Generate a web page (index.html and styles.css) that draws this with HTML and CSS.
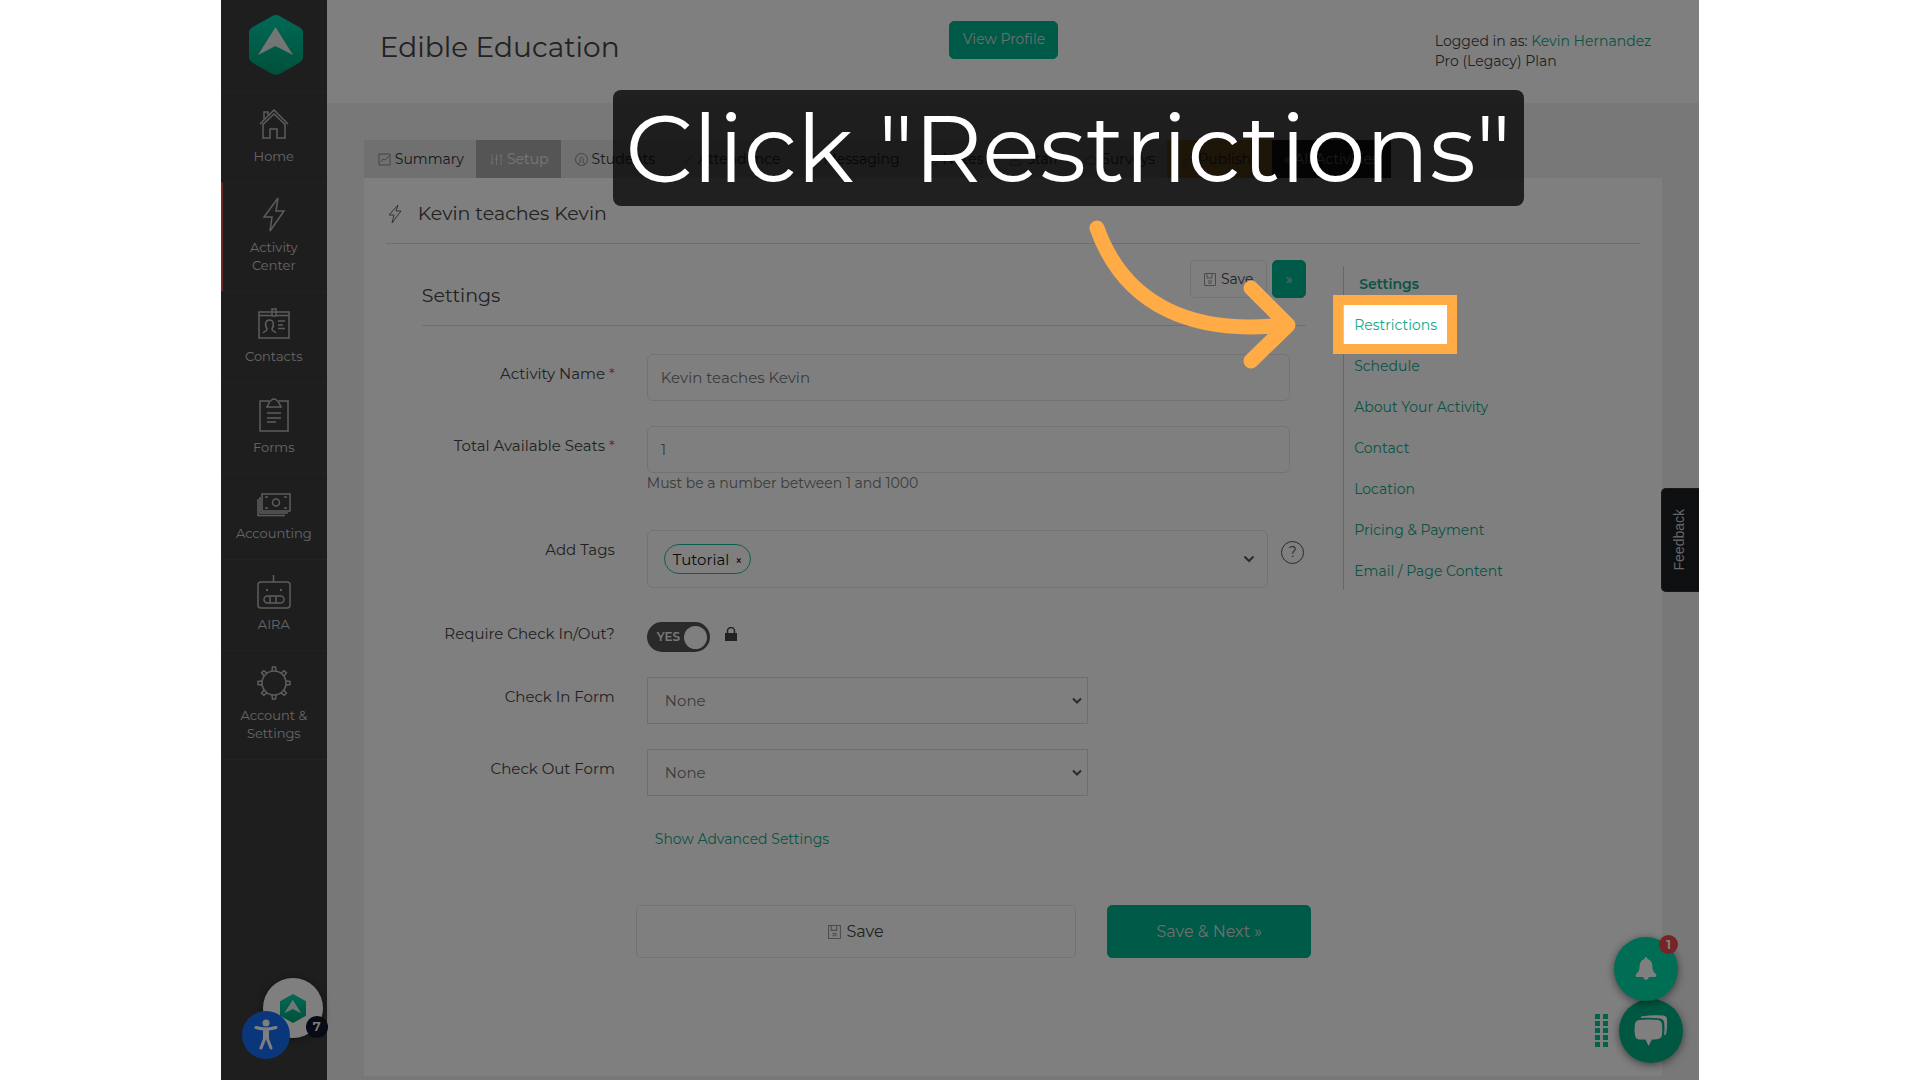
FILE: index.html
```html
<!DOCTYPE html>
<html lang="en">
  <head>
    <meta charset="UTF-8" />
    <meta name="viewport" content="width=device-width, initial-scale=1.0" />
    <title>Edible Education - Activity Settings</title>
    <link rel="stylesheet" href="styles.css">
  </head>
  <body>
    <div class="stage">
      <!-- Sidebar -->
      <aside class="sidebar">
        <a class="logo" href="#" aria-label="Dashboard">
          <svg width="54" height="60" viewBox="0 0 54 60">
            <defs>
              <linearGradient id="hex" x1="0" y1="0" x2="0" y2="1">
                <stop offset="0" stop-color="#00d4ae" />
                <stop offset="1" stop-color="#00a076" />
              </linearGradient>
            </defs>
            <path fill="url(#hex)" d="M23 1.200q4-2.200 8 0L51 12.500q3 2 3 5v25q0 3-3 5L31 58.800q-4 2.200-8 0L3 47.500q-3-2-3-5v-25q0-3 3-5z" />
            <path fill="#e4ece8" d="M26.500 12L44 40 26.500 31 9 40z" />
            <path fill="#c3cbc7" d="M26.500 31L44 40 17 27z" opacity=".5" />
          </svg>
        </a>
        <nav class="menu">
          <a href="#">
            <svg width="34" height="34" viewBox="0 0 34 34"><path d="M3 17L17 3l14 14M6 16v15h7v-9h7v9h8V16M6.500 17L17 7l10.500 10M7 12V5h4v3" /></svg>
            <span>Home</span>
          </a>
          <a href="#" class="current">
            <svg width="34" height="34" viewBox="0 0 34 34"><path d="M21 0L7 19h8l-2 14 14-20h-8z" /></svg>
            <span>Activity Center</span>
          </a>
          <a href="#">
            <svg width="34" height="34" viewBox="0 0 34 34"><path d="M2 5h30v26H2zM2 8.500h12M20 8.500h12M15 9V2h4v7zM6 26c1-2 4-1.500 4-4-3-5-1-9 2.500-9s5.500 4 2.500 9c0 2.500 3 2 4 4M21 14h7M21 18h5M21 21.500h7" /></svg>
            <span>Contacts</span>
          </a>
          <a href="#">
            <svg width="34" height="34" viewBox="0 0 34 34"><path d="M12 3H3v30h28V3h-9M13 3c2 0 1-2 4-2s2 2 4 2l3 6H10zM10 15h14M10 20h14M10 24h9" /></svg>
            <span>Forms</span>
          </a>
          <a href="#" class="short">
            <svg width="34" height="29" viewBox="0 0 34 29"><path d="M5 5h28v17H5zM3 8v16h28M1 10v16.500h27M8 8h3M27 8h3M8 19h3M27 19h3" /><circle cx="19" cy="13.500" r="3.500" /></svg>
            <span>Accounting</span>
          </a>
          <a href="#">
            <svg width="34" height="34" viewBox="0 0 34 34"><rect x="1" y="7" width="32" height="26" rx="3" /><path d="M16.500 7V0" /><rect x="7" y="21" width="20" height="7" rx="3.500" /><path d="M13 21v7M19 21v7" /><path d="M9 15h2M23 15h2" stroke-width="2" /></svg>
            <span>AIRA</span>
          </a>
          <a href="#">
            <svg width="34" height="34" viewBox="0 0 34 34"><circle cx="17" cy="17" r="12" /><g id="teeth"><path d="M15 5l.500-4h3l.500 4M15 29l.500 4h3l.500-4M5 15l-4 .500v3l4 .500M29 15l4 .500v3l-4 .500" /></g><use href="#teeth" transform="rotate(45 17 17)" /></svg>
            <span>Account &amp; Settings</span>
          </a>
        </nav>
      </aside>

      <div class="page">
        <header class="topbar">
          <h1>Edible Education</h1>
          <button class="btn green profile">View Profile</button>
          <p class="login">Logged in as: <a href="#">Kevin Hernandez</a><br />Pro (Legacy) Plan</p>
        </header>

        <main class="content">
          <nav class="tabs">
            <a href="#"><svg width="13" height="13" viewBox="0 0 13 13"><path d="M1 1h11v11H1zM3 9l2-3 2 1 4-4" /></svg>Summary</a>
            <a href="#" class="active"><svg width="13" height="13" viewBox="0 0 13 13"><path d="M2 1v11M6.500 1v11M11 1v11M.500 10h3M5 6h3M9.500 3h3" /></svg>Setup</a>
            <a href="#"><svg width="13" height="13" viewBox="0 0 13 13"><circle cx="6.500" cy="6.500" r="6" /><path d="M3 11c2-1 2-1 2-3-1-5 4-5 3 0 0 2 0 2 2 3" /></svg>Students</a>
            <a href="#"><svg width="13" height="13" viewBox="0 0 13 13"><path d="M2 7l3 3 6-8" /></svg>Attendance</a>
            <a href="#"><svg width="13" height="13" viewBox="0 0 13 13"><path d="M1 3h11v8H1zl5.500 5L12 3" /></svg>Messaging</a>
            <a href="#"><svg width="13" height="13" viewBox="0 0 13 13"><circle cx="6.500" cy="6.500" r="5.500" /></svg>Notes</a>
            <a href="#"><svg width="13" height="13" viewBox="0 0 13 13"><circle cx="6.500" cy="4" r="3" /><path d="M1 12q0-5 5.500-5t5.500 5z" /></svg>Staff</a>
            <a href="#"><svg width="13" height="13" viewBox="0 0 13 13"><path d="M3 11q-3-1-2-3t3-2q1-4 4-3t2 3q3 1 2 3t-2 2z" /></svg>Surveys</a>
            <a href="#" class="publish"><svg width="13" height="13" viewBox="0 0 13 13"><path d="M6 4l3-3 3 3-3 3M7 9l-3 3-3-3 3-3M4 9l5-5" /></svg>Publish...</a>
            <a href="#" class="all">« All Activities</a>
          </nav>

          <section class="panel">
            <h2 class="activity-title">
              <svg width="14" height="20" viewBox="0 0 14 20"><path d="M10 1L1 11h5L4 19l9-12H8z" /></svg>
              Kevin teaches Kevin
            </h2>

            <div class="columns">
              <form class="settings">
                <div class="settings-head">
                  <h3>Settings</h3>
                  <div class="quick">
                    <button type="button" class="btn plain"><svg width="12" height="13" viewBox="0 0 12 13"><path d="M.500 .500h11v12H.500zM3 1v4h5V1M4 8h4M4 10h4" /></svg>Save</button>
                    <button type="button" class="btn green next">»</button>
                  </div>
                </div>

                <div class="row">
                  <label for="name">Activity Name <i>*</i></label>
                  <input type="text" id="name" value="Kevin teaches Kevin" />
                </div>
                <div class="row seats">
                  <label for="seats">Total Available Seats <i>*</i></label>
                  <div class="control">
                    <input type="text" id="seats" value="1" />
                    <small>Must be a number between 1 and 1000</small>
                  </div>
                </div>
                <div class="row tags">
                  <label for="tag">Add Tags</label>
                  <div class="tag-line">
                    <div class="tag-box">
                      <button type="button" id="tag" class="chip">Tutorial <b>×</b></button>
                      <svg width="12" height="8" viewBox="0 0 12 8"><path d="M1.500 1.500L6 6l4.500-4.500" /></svg>
                    </div>
                    <a class="help" href="#">?</a>
                  </div>
                </div>
                <div class="row check">
                  <label for="require">Require Check In/Out?</label>
                  <div class="toggle-line">
                    <span class="toggle"><input type="checkbox" id="require" checked /><em>YES</em></span>
                    <svg width="12" height="15" viewBox="0 0 12 15"><path d="M0 6h12v8H0z" /><path d="M2.500 7V4a3.500 3.500 0 0 1 7 0v3" fill="none" stroke="#444" stroke-width="1.500" /></svg>
                  </div>
                </div>
                <div class="row">
                  <label for="check-in">Check In Form</label>
                  <div class="select">
                    <select id="check-in"><option>None</option></select>
                    <svg width="10" height="7" viewBox="0 0 10 7"><path d="M1 1.500l4 4 4-4" /></svg>
                  </div>
                </div>
                <div class="row">
                  <label for="check-out">Check Out Form</label>
                  <div class="select">
                    <select id="check-out"><option>None</option></select>
                    <svg width="10" height="7" viewBox="0 0 10 7"><path d="M1 1.500l4 4 4-4" /></svg>
                  </div>
                </div>
                <a class="advanced" href="#">Show Advanced Settings</a>

                <div class="actions">
                  <button type="button" class="btn plain"><svg width="13" height="14" viewBox="0 0 12 13"><path d="M.500 .500h11v12H.500zM3 1v4h5V1M4 8h4M4 10h4" /></svg>Save</button>
                  <button type="button" class="btn green">Save &amp; Next »</button>
                </div>
              </form>

              <nav class="steps">
                <a href="#" class="on">Settings</a>
                <a href="#" class="spotlight">Restrictions</a>
                <a href="#">Schedule</a>
                <a href="#">About Your Activity</a>
                <a href="#">Contact</a>
                <a href="#">Location</a>
                <a href="#">Pricing &amp; Payment</a>
                <a href="#">Email / Page Content</a>
              </nav>
            </div>
          </section>
        </main>
      </div>

      <!-- Floating widgets -->
      <button class="feedback">Feedback</button>

      <div class="float-left">
        <button class="launcher" aria-label="Checklist">
          <svg width="26" height="29" viewBox="0 0 54 60">
            <path fill="url(#hex)" d="M27 0L54 15v30L27 60 0 45V15z" />
            <path fill="#e4ece8" d="M26.500 12L44 40 26.500 31 9 40z" />
          </svg>
        </button>
        <span class="count">7</span>
        <button class="access" aria-label="Accessibility">
          <svg width="24" height="32" viewBox="0 0 24 32">
            <circle cx="12" cy="4" r="3.500" />
            <path d="M2 8.500q10 3 20 0M12 11v8M10.500 12v8L7 29M13.500 12v8L17 29" />
          </svg>
        </button>
      </div>

      <div class="float-right">
        <button class="bell" aria-label="Notifications">
          <svg width="22" height="24" viewBox="0 0 22 24"><path d="M11 0q1.500 0 1.500 2 5 1.500 5 8 0 5 3.500 7 1 2.500-1 3h-6q-1 3-3 3t-3-3H2q-2-.500-1-3 3.500-2 3.500-7 0-6.500 5-8Q9.500 0 11 0z" /></svg>
          <span>1</span>
        </button>
        <button class="chat" aria-label="Chat">
          <svg width="34" height="32" viewBox="0 0 34 32"><path d="M7 1.500q12-2 22-1 4 .500 4 4 .500 8-1 15l-2 .500q1-7 0-13-.500-3-4-3.500-9-1-19-.500z" /><path d="M5 5q10-1 19 0 3.500.500 4 4 .500 6 0 11-.500 3.500-4 4-3 .500-6 .500L14.500 31l-3-6.500H5q-3.500-.500-4-4-1-6 0-11.500.500-3.500 4-4z" /></svg>
        </button>
        <svg class="grip" width="13" height="34" viewBox="0 0 13 34"><path d="M2.500 0v34M10.500 0v34" /></svg>
      </div>

      <!-- Tour step -->
      <div class="callout">Click "Restrictions"</div>
      <svg class="arrow" width="220" height="160" viewBox="0 0 220 160">
        <path d="M17 18C45 97 115 125 203 115M171 78l37 37-37 36" />
      </svg>
    </div>
  </body>
</html>
```
FILE: styles.css
```css
* {
  margin: 0;
  padding: 0;
  box-sizing: border-box;
  font-family: Montserrat, Inter, "Open Sans", sans-serif;
}

body {
  background-color: #fff;
  color: #444;
  font-size: 14px;
  line-height: 20px;
}

a {
  color: #12a888;
  text-decoration: none;
}

svg {
  flex: none;
  fill: none;
}

.stage {
  position: relative;
  display: flex;
  width: 77%;
  min-height: 100vh;
  margin: 0 auto;
  overflow: hidden;
  background-color: #f0f0f0;
}

/* Sidebar */
.sidebar {
  flex: none;
  width: 106px;
  background-color: #3c3c3c;
}

.logo {
  display: flex;
  justify-content: center;
  height: 91px;
  padding: 15px 0 0 4px;
}

.menu a {
  display: flex;
  flex-direction: column;
  align-items: center;
  gap: 6px;
  min-height: 91px;
  padding: 15px 16px 17px;
  border-top: 1px solid #444;
  color: #ccc;
  font-size: 13px;
  line-height: 18px;
  text-align: center;
}

.menu a:last-child {
  border-bottom: 1px solid #444;
}

.menu a.current {
  border-left: 2px solid #d9534f;
  padding-left: 14px;
}

.menu a.short {
  min-height: 86px;
}

.menu svg {
  stroke: #bbb;
  stroke-width: 1.5;
}

/* Header */
.page {
  flex: 1;
  display: flex;
  flex-direction: column;
}

.topbar {
  display: grid;
  grid-template-columns: 1fr auto 1fr;
  align-items: start;
  height: 103px;
  padding: 21px 48px 0 30px;
  background-color: #fff;
}

.topbar h1 {
  padding-left: 23px;
  font-size: 28px;
  font-weight: 400;
  line-height: 52px;
}

.login {
  justify-self: end;
  padding-top: 10px;
}

.btn {
  border: 1px solid #00b490;
  border-radius: 5px;
  color: #fff;
  font-size: 14px;
  cursor: pointer;
}

.green {
  background-color: #00b490;
  color: #ddd;
}

.plain {
  display: flex;
  align-items: center;
  justify-content: center;
  gap: 5px;
  background-color: #fff;
  border-color: #e4e4e4;
  color: #444;
}

.plain svg {
  stroke: #999;
}

.profile {
  width: 109px;
  height: 38px;
  padding-bottom: 2px;
}

/* Tabs */
.content {
  flex: 1;
  display: flex;
  flex-direction: column;
  padding: 37px 37px 4px;
}

.tabs {
  display: flex;
}

.tabs a {
  display: flex;
  align-items: center;
  gap: 4px;
  height: 38px;
  padding: 0 12px 0 14px;
  background-color: #e0e0e0;
  color: #333;
}

.tabs svg {
  stroke: #888;
}

.tabs .active {
  background-color: #aaa;
  color: #eee;
}

.tabs .active svg {
  stroke: #ddd;
}

.tabs .publish {
  background-color: #f0ad4e;
}

.tabs .all {
  padding: 0 12px;
  background-color: #222;
  color: #ccc;
}

/* Panel */
.panel {
  flex: 1;
  padding: 0 22px;
  background-color: #fff;
}

.activity-title {
  display: flex;
  align-items: center;
  gap: 16px;
  height: 66px;
  padding: 6px 0 0 2px;
  border-bottom: 1px solid #ddd;
  font-size: 19px;
  font-weight: 400;
}

.activity-title svg {
  stroke: #666;
}

.columns {
  display: flex;
  gap: 37px;
}

.settings {
  flex: 1;
  padding: 16px 0 0 36px;
}

.settings-head {
  display: flex;
  justify-content: space-between;
  height: 66px;
  margin-bottom: 28px;
  border-bottom: 1px solid #ddd;
}

.settings-head h3 {
  padding-top: 26px;
  font-size: 19px;
  font-weight: 400;
}

.quick {
  display: flex;
  gap: 5px;
}

.quick .btn {
  width: 77px;
  height: 38px;
}

.quick .next {
  width: 34px;
}

/* Form rows */
.row {
  display: grid;
  grid-template-columns: 193px 1fr;
  column-gap: 32px;
  align-items: start;
  margin-bottom: 25px;
}

.row label {
  padding-top: 10px;
  font-size: 15px;
  text-align: right;
}

.row i {
  color: #e8474c;
  font-style: normal;
}

.row input[type="text"] {
  width: calc(100% - 16px);
  height: 47px;
  padding: 0 13px;
  border: 1px solid #e4e4e4;
  border-radius: 6px;
  background-color: #fff;
  color: #777;
  font-size: 15px;
}

.row small {
  display: block;
  color: #777;
  font-size: 14px;
}

.row.seats {
  margin-bottom: 37px;
}

.row.tags {
  margin-bottom: 34px;
}

.tag-line {
  display: flex;
  gap: 13px;
}

.tag-box {
  flex: 1;
  display: flex;
  align-items: center;
  justify-content: space-between;
  height: 58px;
  padding: 0 12px 0 16px;
  border: 1px solid #e4e4e4;
  border-radius: 6px;
}

.tag-box svg,
.select svg {
  stroke: #555;
  stroke-width: 2;
}

.chip {
  height: 30px;
  padding: 0 8px;
  border: 1px solid #1abc9c;
  border-radius: 15px;
  background-color: #fff;
  color: #111;
  font-size: 15px;
}

.chip b {
  margin-left: 2px;
  font-size: 12px;
  font-weight: 500;
}

.help {
  width: 23px;
  height: 23px;
  margin: 11px 2px 0 0;
  border: 1px solid #555;
  border-radius: 50%;
  color: #555;
  text-align: center;
}

.row.check label {
  padding-top: 2px;
}

.toggle-line {
  display: flex;
  gap: 15px;
}

.toggle-line svg {
  margin-top: 5px;
  fill: #444;
}

.toggle {
  position: relative;
  width: 63px;
  height: 30px;
}

.toggle input {
  appearance: none;
  display: flex;
  align-items: center;
  justify-content: flex-end;
  width: 100%;
  height: 100%;
  padding: 3px;
  border-radius: 15px;
  background-color: #555;
}

.toggle input::before {
  content: "";
  width: 23px;
  height: 23px;
  border-radius: 50%;
  background-color: #fff;
}

.toggle em {
  position: absolute;
  top: 5px;
  left: 10px;
  color: #eee;
  font-size: 12px;
  font-style: normal;
  font-weight: 600;
}

.select {
  position: relative;
  width: 441px;
}

.select select {
  appearance: none;
  display: block;
  width: 100%;
  height: 47px;
  padding: 0 17px;
  border: 1px solid #ddd;
  background-color: #fff;
  color: #777;
  font-size: 15px;
}

.select svg {
  position: absolute;
  top: 20px;
  right: 6px;
}

.advanced {
  display: block;
  margin: 33px 0 0 233px;
}

.actions {
  display: flex;
  gap: 31px;
  margin: 56px -5px 0 214px;
}

.actions .btn {
  flex: none;
  width: 204px;
  height: 53px;
  font-size: 16px;
}

.actions .plain {
  flex: 1;
}

/* Section links */
.steps {
  display: flex;
  flex-direction: column;
  gap: 21px;
  width: 297px;
  height: 324px;
  margin-top: 22px;
  padding: 8px 10px;
  border-left: 1px solid #ccc;
}

.steps .on {
  padding-left: 5px;
  font-weight: 600;
}

.spotlight {
  position: relative;
  align-self: flex-start;
}

/* Dims everything except the link */
.spotlight::after {
  content: "";
  position: absolute;
  inset: -10px -10px -9px -11px;
  z-index: 10;
  box-shadow: 0 0 0 10px #ffac47, 0 0 0 3000px rgba(0, 0, 0, 0.5);
}

/* Floating widgets */
.feedback {
  position: absolute;
  top: 488px;
  right: 0;
  width: 38px;
  height: 104px;
  padding-right: 3px;
  border: 1px solid #333;
  border-right: none;
  border-radius: 5px 0 0 5px;
  background-color: #1c1f22;
  color: #ccc;
  font-family: "Liberation Sans", sans-serif;
  font-size: 14px;
  writing-mode: sideways-lr;
}

.float-left button,
.float-right button {
  position: absolute;
  display: flex;
  align-items: center;
  justify-content: center;
  border: none;
  border-radius: 50%;
}

.float-left {
  position: absolute;
  bottom: 21px;
  left: 21px;
  width: 86px;
  height: 81px;
}

.launcher {
  top: 0;
  left: 21px;
  width: 60px;
  height: 60px;
  background-color: #fff;
  box-shadow: 0 2px 8px rgba(0, 0, 0, 0.4);
}

.count {
  position: absolute;
  top: 38px;
  right: 0;
  width: 22px;
  height: 22px;
  border-radius: 50%;
  background-color: #0f172a;
  color: #fff;
  font-size: 13px;
  font-weight: 600;
  text-align: center;
}

.access {
  bottom: 0;
  left: 0;
  width: 48px;
  height: 48px;
  background-color: #146ff8;
}

.access circle {
  fill: #fff;
}

.access path {
  stroke: #fff;
  stroke-width: 3;
  stroke-linecap: round;
}

.float-right {
  position: absolute;
  right: 16px;
  bottom: 17px;
  width: 88px;
  height: 129px;
}

.bell,
.chat {
  width: 64px;
  height: 64px;
  box-shadow: 0 2px 8px rgba(0, 0, 0, 0.5);
}

.bell {
  top: 3px;
  right: 5px;
  z-index: 1;
  background-color: #00dca8;
}

.bell span {
  position: absolute;
  top: -2px;
  right: 0;
  width: 19px;
  height: 19px;
  border-radius: 50%;
  background-color: #f0484e;
  color: #fff;
  font-size: 12px;
  font-weight: 700;
  line-height: 19px;
}

.chat {
  right: 0;
  bottom: 0;
  background-color: #00b084;
}

.float-right button svg {
  fill: #fff;
}

.grip {
  position: absolute;
  bottom: 15px;
  left: 0;
  stroke: #00c896;
  stroke-width: 5;
  stroke-dasharray: 5 2;
}

/* Tour callout */
.callout {
  position: absolute;
  top: 90px;
  left: 392px;
  z-index: 11;
  width: 911px;
  height: 116px;
  border-radius: 8px;
  background-color: rgba(0, 0, 0, 0.75);
  color: #fff;
  font-size: 95px;
  line-height: 116px;
  text-align: center;
  white-space: nowrap;
}

.arrow {
  position: absolute;
  top: 210px;
  left: 859px;
  z-index: 11;
  stroke: #ffac47;
  stroke-width: 15;
  stroke-linecap: round;
  stroke-linejoin: round;
}
```
